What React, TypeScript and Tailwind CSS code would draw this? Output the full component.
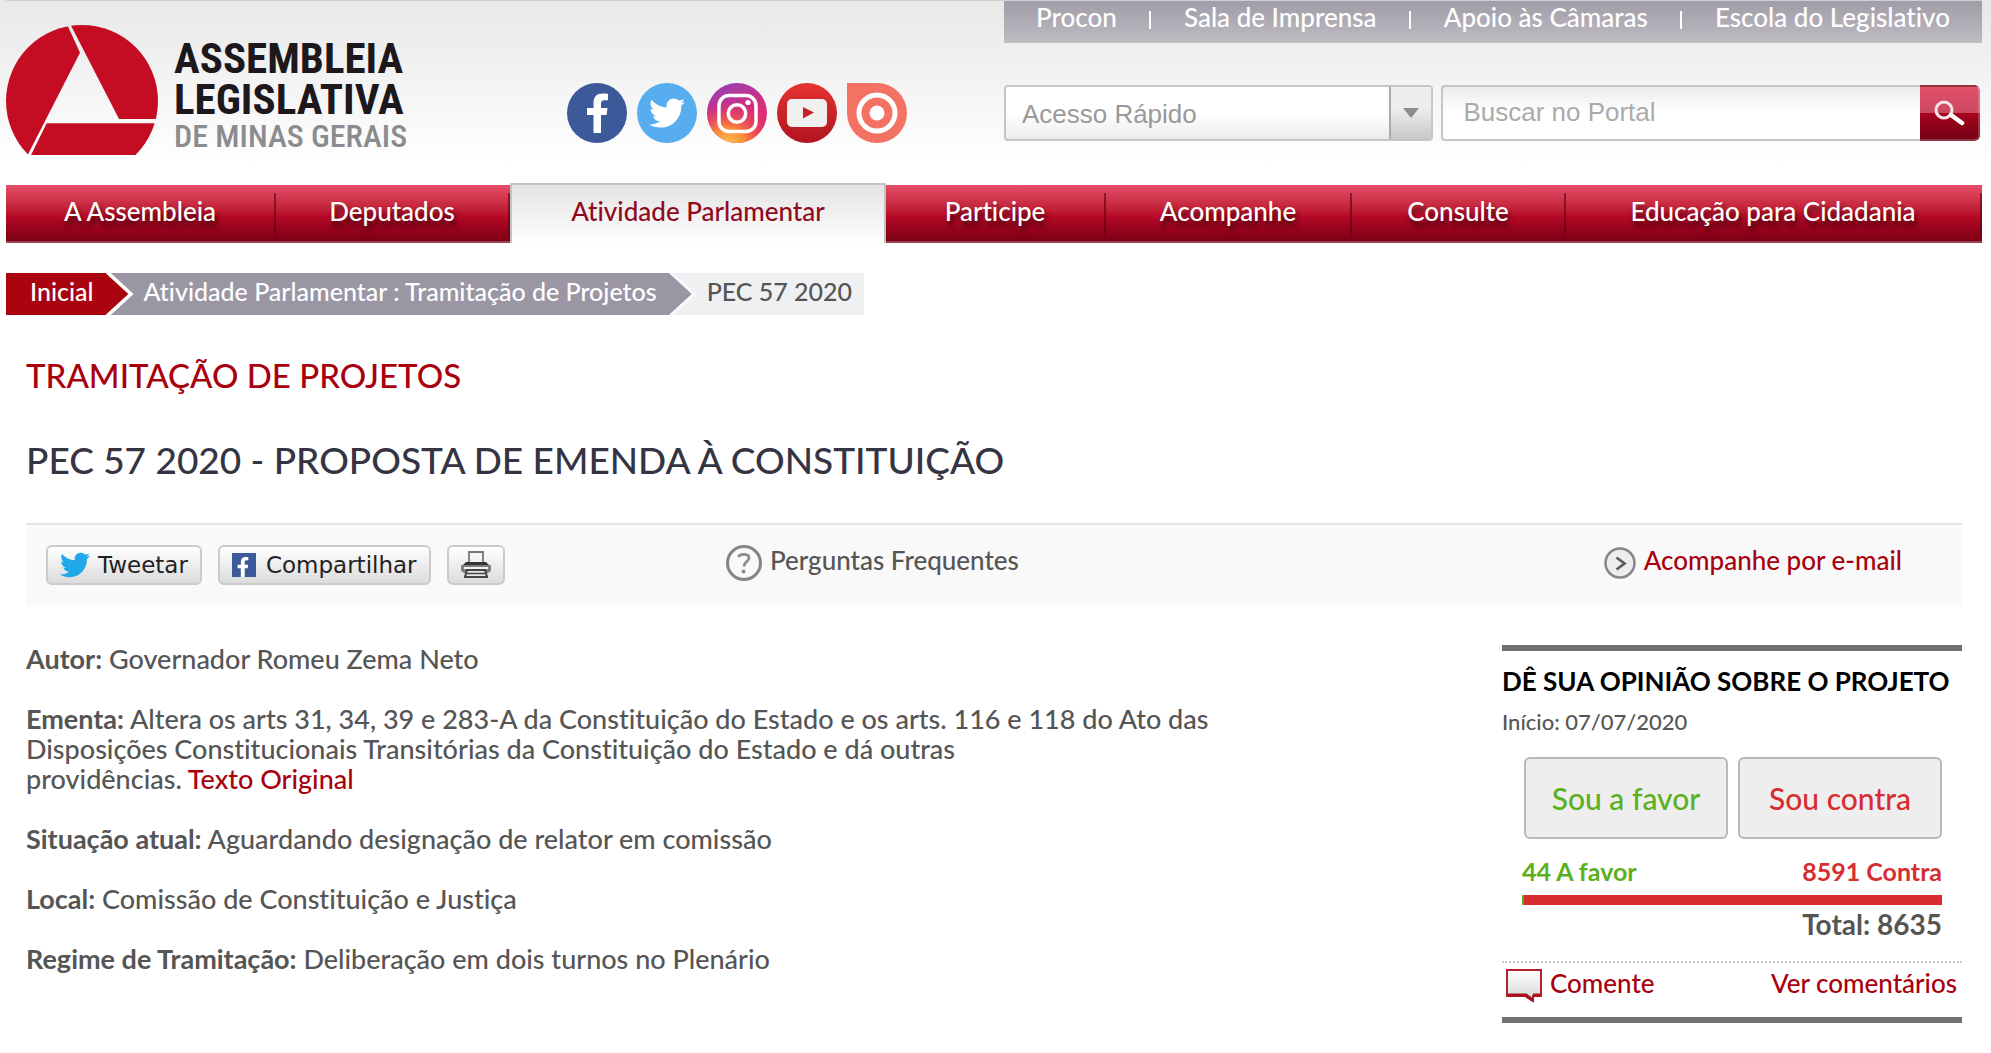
import React from 'react';
import { FaFacebookF, FaTwitter } from 'react-icons/fa';

const topLinks = ['Procon', 'Sala de Imprensa', 'Apoio às Câmaras', 'Escola do Legislativo'];

const menuItems = [
  'A Assembleia',
  'Deputados',
  'Atividade Parlamentar',
  'Participe',
  'Acompanhe',
  'Consulte',
  'Educação para Cidadania',
];

const activeItem = 'Atividade Parlamentar';

const votes = { favor: 44, contra: 8591 };

function Logo() {
  return (
    <a href="#" className="flex shrink-0 pt-6">
      <svg viewBox="0 0 152 130" className="h-[130px] w-[152px]" aria-hidden="true">
        <clipPath id="logo-disc">
          <circle cx="76" cy="76" r="76" />
        </clipPath>
        <g clipPath="url(#logo-disc)" fill="#c40d22">
          <path d="M0 0H61.3L74 27.7L21.7 130H0Z" />
          <path d="M64.7 0H152V94H113Z" />
          <path d="M40.7 98.3H152V130H25Z" />
        </g>
      </svg>
      <span className="ml-4 flex flex-col pt-[13px] font-['Roboto_Condensed','Roboto',sans-serif] whitespace-nowrap">
        <span className="text-[43px] leading-[41px] font-bold text-[#1d181c]">
          ASSEMBLEIA
          <br />
          LEGISLATIVA
        </span>
        <span className="text-[32px] leading-8 text-[#8b8c8e]">DE MINAS GERAIS</span>
      </span>
    </a>
  );
}

function SocialLinks() {
  return (
    <div className="flex shrink-0 gap-[10px] pt-[82px]">
      <a href="#" aria-label="Facebook">
        <svg viewBox="0 0 60 60" className="size-[60px]">
          <circle cx="30" cy="30" r="30" fill="#3c5a99" />
          <path
            fill="#fff"
            d="M26.5 50V32H20V25H26.5V20C26.5 13.500 30 10.500 35.500 10.500C38 10.500 40 10.700 41 10.900V17.200H37.500C34.700 17.200 34 18.500 34 20.600V25H40.500L39.600 32H34V50Z"
          />
        </svg>
      </a>
      <a href="#" aria-label="Twitter" className="flex size-[60px] items-center justify-center rounded-full bg-[#58adee]">
        <FaTwitter className="size-9 text-white" />
      </a>
      <a href="#" aria-label="Instagram">
        <svg viewBox="0 0 60 60" className="size-[60px]">
          <defs>
            <linearGradient id="insta-base" x1="0.3" y1="0" x2="0.7" y2="1">
              <stop offset="0" stopColor="#9a3fb0" />
              <stop offset="0.45" stopColor="#d12e84" />
              <stop offset="1" stopColor="#e8305a" />
            </linearGradient>
            <radialGradient id="insta-glow" cx="0.35" cy="1.05" r="0.75">
              <stop offset="0" stopColor="#ffc44f" />
              <stop offset="0.4" stopColor="#fb8b3a" />
              <stop offset="1" stopColor="#e8305a" stopOpacity="0" />
            </radialGradient>
          </defs>
          <circle cx="30" cy="30" r="30" fill="url(#insta-base)" />
          <circle cx="30" cy="30" r="30" fill="url(#insta-glow)" />
          <g fill="none" stroke="#fff" strokeWidth="3.500">
            <rect x="12" y="12.500" width="37" height="36" rx="10" />
            <circle cx="30" cy="30.500" r="8.700" />
          </g>
          <circle cx="41" cy="19.500" r="2.600" fill="#fff" />
        </svg>
      </a>
      <a href="#" aria-label="YouTube">
        <svg viewBox="0 0 60 60" className="size-[60px]">
          <defs>
            <linearGradient id="yt" x1="0" y1="0" x2="0" y2="1">
              <stop offset="0" stopColor="#e63330" />
              <stop offset="1" stopColor="#b01420" />
            </linearGradient>
          </defs>
          <circle cx="30" cy="30" r="30" fill="url(#yt)" />
          <rect x="10" y="16" width="40" height="28" rx="5" fill="#f0f0f0" />
          <path d="M26 24V35.500L37 29.500Z" fill="#c5212a" />
        </svg>
      </a>
      <a href="#" aria-label="Podcast">
        <svg viewBox="0 0 60 60" className="size-[60px]">
          <path d="M0 0H30A30 30 0 1 1 0 30Z" fill="#f47264" />
          <circle cx="30" cy="30" r="18" fill="none" stroke="#fff" strokeWidth="5" />
          <circle cx="30" cy="30" r="7.500" fill="#fff" />
        </svg>
      </a>
    </div>
  );
}

function SearchTools() {
  return (
    <div className="mt-[42px] mr-[2px] flex h-14 gap-2 font-['Liberation_Sans',Arial,sans-serif] text-[26px]">
      <div className="relative w-[44%]">
        <select
          aria-label="Acesso Rápido"
          className="h-full w-full appearance-none rounded border-2 border-[#c6c6c6] bg-linear-to-b from-white from-50% to-[#ececec] pt-[2px] pl-4 text-[#999]"
        >
          <option>Acesso Rápido</option>
        </select>
        <span className="pointer-events-none absolute inset-y-[2px] right-[2px] flex w-[42px] items-center justify-center border-l-2 border-[#aaa] bg-linear-to-b from-[#eee] from-40% to-[#c8c8c8]">
          <svg viewBox="0 0 16 10" className="h-[10px] w-4" aria-hidden="true">
            <path d="M0 0H16L8 10Z" fill="#8c8c8c" />
          </svg>
        </span>
      </div>
      <form className="flex flex-1">
        <input
          type="text"
          aria-label="Buscar no Portal"
          placeholder="Buscar no Portal"
          className="w-full min-w-0 flex-1 rounded-l border-2 border-r-0 border-[#c6c6c6] bg-linear-to-b from-[#ececec] to-white to-50% pb-[2px] pl-5 placeholder:text-[#aaa]"
        />
        <button
          type="button"
          aria-label="Buscar"
          className="flex w-[60px] items-center justify-center rounded-r-md bg-linear-to-b from-[#e64f6a] via-[#c94a60] via-50% to-[#740012]"
        >
          <span className="flex h-full w-full items-center justify-center rounded-r-md border-2 border-l-0 border-white/20 bg-linear-to-b from-transparent from-50% via-[#a80420] via-50% to-[#740012]">
            <svg viewBox="0 0 32 26" className="h-[26px] w-8" aria-hidden="true">
              <circle cx="11" cy="10" r="8" fill="none" stroke="#f8e4e8" strokeWidth="3" />
              <path d="M18 15L29 23" stroke="#fff" strokeWidth="4.500" strokeLinecap="round" />
            </svg>
          </span>
        </button>
      </form>
    </div>
  );
}

function Header() {
  return (
    <header className="bg-linear-to-b from-[#e8e8e8] to-white to-90% pr-[9px] pl-[6px]">
      <div className="flex h-[183px] border-t border-[#cfcfcf]">
        <Logo />
        <div className="ml-40">
          <SocialLinks />
        </div>
        <div className="ml-auto w-[49.5%]">
          <div className="flex h-[42px] items-start justify-between bg-linear-to-b from-[#a19da8] to-[#bebbc3] px-8 pt-[3px] text-[26px] leading-[26px] whitespace-nowrap text-white">
            {topLinks.map((link, i) => (
              <React.Fragment key={link}>
                {i > 0 && <span className="mt-[7px] h-[18px] w-[2px] bg-white" />}
                <a href="#">{link}</a>
              </React.Fragment>
            ))}
          </div>
          <SearchTools />
        </div>
      </div>
    </header>
  );
}

function MainMenu() {
  return (
    <nav className="mr-[9px] ml-[6px]">
      <ul className="grid grid-cols-[270fr_234fr_376fr_220fr_246fr_214fr_416fr] items-end text-[26px] leading-[26px] whitespace-nowrap">
        {menuItems.map((item) =>
          item === activeItem ? (
            <li key={item} className="h-[60px] border-2 border-b-0 border-[#c3c3c3] bg-linear-to-b from-[#e3e3e5] to-white text-center">
              <a href="#" className="block pt-[13px] text-[#900a1d]">{item}</a>
            </li>
          ) : (
            <li
              key={item}
              className="flex h-[58px] border-b-2 border-[#994456] bg-linear-to-b from-[#e64d69] via-[#b70a27] via-55% to-[#7c0014]"
            >
              <a href="#" className="flex-1 pt-[13px] text-center text-white [text-shadow:2px_5px_5px_rgba(0,0,0,0.6)]">{item}</a>
              <span className="mt-2 h-[42px] w-[2px] bg-[#5a0014]/60" />
            </li>
          )
        )}
      </ul>
    </nav>
  );
}

function Breadcrumb() {
  return (
    <div className="mt-[30px] ml-[6px] flex h-[42px] text-[25px] leading-9 whitespace-nowrap text-white">
      <a href="#" className="bg-[#a9040f] pr-3 pl-6">Inicial</a>
      <svg viewBox="0 0 28 42" className="h-[42px] w-7 bg-[#9a96a4]" aria-hidden="true">
        <path d="M0 0L23 21L0 42Z" fill="#a9040f" />
        <path d="M0 -2L25 21L0 44" fill="none" stroke="#fff" strokeWidth="3.500" />
      </svg>
      <a href="#" className="bg-[#9a96a4] pr-3 pl-[10px]">Atividade Parlamentar : Tramitação de Projetos</a>
      <svg viewBox="0 0 28 42" className="h-[42px] w-7 bg-[#eff0f2]" aria-hidden="true">
        <path d="M0 0L23 21L0 42Z" fill="#9a96a4" />
        <path d="M0 -2L25 21L0 44" fill="none" stroke="#f8f9fa" strokeWidth="3" />
      </svg>
      <span className="bg-[#eff0f2] pr-3 pl-[10px] text-[#555]">PEC 57 2020</span>
    </div>
  );
}

function ShareButton({ label, children }: { label?: string; children: React.ReactNode }) {
  return (
    <button
      type="button"
      aria-label={label ? undefined : 'Imprimir'}
      className="flex h-10 items-center gap-2 rounded-md border-2 border-[#cbcbcb] bg-linear-to-b from-white to-[#dcdcdc] px-3 font-['DejaVu_Sans',Verdana,sans-serif] text-[23px] text-[#222]"
    >
      {children}
      {label}
    </button>
  );
}

function Toolbar() {
  return (
    <div className="mt-[41px] flex h-[82px] items-start border-t-2 border-[#e5e5e5] bg-[#f9f9f9] pt-5 text-[26px] leading-[30px] whitespace-nowrap">
      <div className="flex w-[36%] gap-4 pl-5">
        <ShareButton label="Tweetar">
          <FaTwitter className="size-[30px] text-[#1fa9e8]" />
        </ShareButton>
        <ShareButton label="Compartilhar">
          <span className="mr-[2px] flex size-6 items-end justify-end bg-[#3c5a99] pr-[3px]">
            <FaFacebookF className="size-5 text-white" />
          </span>
        </ShareButton>
        <ShareButton>
          <svg viewBox="0 0 30 28" preserveAspectRatio="none" className="h-7 w-[30px]" aria-hidden="true">
            <path d="M8 11V1H22V11" fill="#f4f4f4" stroke="#777" strokeWidth="1.800" />
            <path d="M5 11H25L28 14H2Z" fill="#333" />
            <path d="M0 14H30V20L27 22H3L0 20Z" fill="#7d7d7d" />
            <path d="M3 16H27V18H3Z" fill="#f2f2f2" />
            <path d="M6 19H24L26 26H4Z" fill="#e8e8e8" stroke="#444" strokeWidth="2" />
            <path d="M5 22.500H25" stroke="#444" strokeWidth="1.500" />
          </svg>
        </ShareButton>
      </div>
      <a href="#" className="ml-[3px] flex gap-2 text-[#555]">
        <svg viewBox="0 0 36 36" className="size-9" aria-hidden="true">
          <circle cx="18" cy="18" r="16.500" fill="none" stroke="#858585" strokeWidth="3" />
          <path d="M12.500 12C13.500 8.500 23 8 23 13C23 17 18 16.500 18 21.500" fill="none" stroke="#8c8c8c" strokeWidth="2.800" />
          <circle cx="17.500" cy="26.500" r="2" fill="#8c8c8c" />
        </svg>
        Perguntas Frequentes
      </a>
      <a href="#" className="mr-[60px] ml-auto flex gap-2 text-[#a8000d]">
        <svg viewBox="0 0 32 32" className="mt-[2px] size-8" aria-hidden="true">
          <circle cx="16" cy="16" r="14.500" fill="#ededee" stroke="#85858d" strokeWidth="2.500" />
          <path d="M12.500 10.500L20.500 16.500L12.500 22.500" fill="none" stroke="#5c5c64" strokeWidth="2.800" />
        </svg>
        Acompanhe por e-mail
      </a>
    </div>
  );
}

function ProjectDetails() {
  return (
    <div className="flex-1 space-y-[30px] text-[27px] leading-[30px] text-[#555]">
      <p><strong>Autor:</strong> Governador Romeu Zema Neto</p>
      <p>
        <strong>Ementa:</strong> Altera os arts 31, 34, 39 e 283-A da Constituição do Estado e os arts. 116 e 118 do Ato das
        <br />
        Disposições Constitucionais Transitórias da Constituição do Estado e dá outras
        <br />
        providências. <a href="#" className="text-[#a8000d]">Texto Original</a>
      </p>
      <p><strong>Situação atual:</strong> Aguardando designação de relator em comissão</p>
      <p><strong>Local:</strong> Comissão de Constituição e Justiça</p>
      <p><strong>Regime de Tramitação:</strong> Deliberação em dois turnos no Plenário</p>
    </div>
  );
}

function OpinionBox() {
  const total = votes.favor + votes.contra;

  return (
    <aside className="mt-px w-[460px] shrink-0 border-y-[6px] border-[#707173] whitespace-nowrap">
      <h3 className="pt-[15px] text-[26px] leading-[30px] font-bold text-black">DÊ SUA OPINIÃO SOBRE O PROJETO</h3>
      <p className="mt-3 text-[22px] leading-7 text-[#555]">Início: 07/07/2020</p>
      <div className="mt-[21px] mr-5 ml-[22px] grid grid-cols-2 gap-[10px] text-[30px]">
        <button type="button" className="h-[82px] rounded-md border-2 border-[#b9b9b9] bg-[#eee] text-[#5ab01f]">
          Sou a favor
        </button>
        <button type="button" className="h-[82px] rounded-md border-2 border-[#b9b9b9] bg-[#eee] text-[#d72d31]">
          Sou contra
        </button>
      </div>
      <div className="mx-5 mt-[17px] font-bold">
        <div className="flex justify-between text-[25px] leading-[30px]">
          <span className="text-[#5ab01f]">{votes.favor} A favor</span>
          <span className="text-[#d72d31]">{votes.contra} Contra</span>
        </div>
        <div className="mt-[9px] h-[10px] bg-[#d72d31]">
          <div className="h-full bg-[#5ab01f]" style={{ width: `${(votes.favor / total) * 100}%` }} />
        </div>
        <p className="mt-[3px] text-right text-[28px] leading-8 text-[#555]">Total: {total}</p>
      </div>
      <div className="mt-[21px] flex h-14 justify-between border-t-2 border-dotted border-[#c9c9c9] pt-[5px] pr-[5px] pl-1 text-[26px] leading-[30px] text-[#a8000d]">
        <a href="#" className="flex gap-2">
          <svg viewBox="0 0 36 34" className="mt-px h-[34px] w-9" aria-hidden="true">
            <defs>
              <linearGradient id="balloon" x1="0" y1="0" x2="0" y2="1">
                <stop offset="0" stopColor="#fff" />
                <stop offset="1" stopColor="#d2d4d4" />
              </linearGradient>
            </defs>
            <path d="M1 1H35V27H27V32L19 27H1Z" fill="url(#balloon)" stroke="#b3202c" strokeWidth="2" />
            <path d="M2 26H20L27 31.500" fill="none" stroke="#a8101c" strokeWidth="3" />
            <path d="M27 26H34" stroke="#a8101c" strokeWidth="3" />
          </svg>
          Comente
        </a>
        <a href="#">Ver comentários</a>
      </div>
    </aside>
  );
}

export default function App() {
  return (
    <div className="min-h-screen bg-white font-['Lato','Trebuchet_MS',sans-serif] font-medium [font-variant-ligatures:none]">
      <Header />
      <MainMenu />
      <Breadcrumb />
      <main className="mr-[29px] ml-[26px]">
        <h1 className="mt-10 text-[33px] leading-10 text-[#a8000d]">TRAMITAÇÃO DE PROJETOS</h1>
        <h2 className="mt-[43px] text-[37px] leading-[44px] text-[#353443]">
          PEC 57 2020 - PROPOSTA DE EMENDA À CONSTITUIÇÃO
        </h2>
        <Toolbar />
        <div className="mt-[39px] flex gap-10">
          <ProjectDetails />
          <OpinionBox />
        </div>
      </main>
    </div>
  );
}
